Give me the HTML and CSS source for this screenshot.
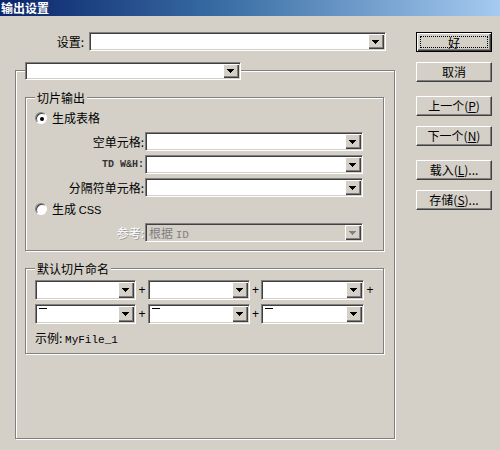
FILE: index.html
```html
<!DOCTYPE html>
<html lang="zh">
<head>
<meta charset="utf-8">
<title>输出设置</title>
<link rel="stylesheet" href="styles.css">
</head>
<body>
<div class="window">
<div class="titlebar">输出设置</div>
<div class="dialog">
  <div class="main">
    <div class="setrow">
      <span class="setlabel">设置:</span>
      <div class="combo w296"><div class="field"></div><div class="dd"><svg width="7" height="4" class="arr"><rect x="0" y="0" width="7" height="1"/><rect x="1" y="1" width="5" height="1"/><rect x="2" y="2" width="3" height="1"/><rect x="3" y="3" width="1" height="1"/></svg></div></div>
    </div>
    <div class="outer">
      <div class="combo legendcombo"><div class="field"></div><div class="dd"><svg width="7" height="4" class="arr"><rect x="0" y="0" width="7" height="1"/><rect x="1" y="1" width="5" height="1"/><rect x="2" y="2" width="3" height="1"/><rect x="3" y="3" width="1" height="1"/></svg></div></div>
      <div class="group g1">
        <div class="glegend">切片输出</div>
        <div class="radiorow"><span class="radio"><span class="dot"></span></span><span>生成表格</span></div>
        <div class="frow r1"><span class="flabel">空单元格:</span><div class="combo wide"><div class="field"></div><div class="dd"><svg width="7" height="4" class="arr"><rect x="0" y="0" width="7" height="1"/><rect x="1" y="1" width="5" height="1"/><rect x="2" y="2" width="3" height="1"/><rect x="3" y="3" width="1" height="1"/></svg></div></div></div>
        <div class="frow r2"><span class="flabel mono">TD W&amp;H:</span><div class="combo wide"><div class="field"></div><div class="dd"><svg width="7" height="4" class="arr"><rect x="0" y="0" width="7" height="1"/><rect x="1" y="1" width="5" height="1"/><rect x="2" y="2" width="3" height="1"/><rect x="3" y="3" width="1" height="1"/></svg></div></div></div>
        <div class="frow r2"><span class="flabel">分隔符单元格:</span><div class="combo wide"><div class="field"></div><div class="dd"><svg width="7" height="4" class="arr"><rect x="0" y="0" width="7" height="1"/><rect x="1" y="1" width="5" height="1"/><rect x="2" y="2" width="3" height="1"/><rect x="3" y="3" width="1" height="1"/></svg></div></div></div>
        <div class="radiorow r5"><span class="radio off"></span><span>生成 <span class="latin">CSS</span></span></div>
        <div class="frow r6"><span class="flabel disabled">参考:</span><div class="combo wide dis"><div class="field"><span class="distext">根据 <span class="latin">ID</span></span></div><div class="dd"><svg width="7" height="4" class="arr"><rect x="0" y="0" width="7" height="1"/><rect x="1" y="1" width="5" height="1"/><rect x="2" y="2" width="3" height="1"/><rect x="3" y="3" width="1" height="1"/></svg></div></div></div>
      </div>
      <div class="group g2">
        <div class="glegend">默认切片命名</div>
        <div class="nrow">
          <div class="combo n1"><div class="field"></div><div class="dd"><svg width="7" height="4" class="arr"><rect x="0" y="0" width="7" height="1"/><rect x="1" y="1" width="5" height="1"/><rect x="2" y="2" width="3" height="1"/><rect x="3" y="3" width="1" height="1"/></svg></div></div>
          <span class="plus p1">+</span>
          <div class="combo n2"><div class="field"></div><div class="dd"><svg width="7" height="4" class="arr"><rect x="0" y="0" width="7" height="1"/><rect x="1" y="1" width="5" height="1"/><rect x="2" y="2" width="3" height="1"/><rect x="3" y="3" width="1" height="1"/></svg></div></div>
          <span class="plus p2">+</span>
          <div class="combo n3"><div class="field"></div><div class="dd"><svg width="7" height="4" class="arr"><rect x="0" y="0" width="7" height="1"/><rect x="1" y="1" width="5" height="1"/><rect x="2" y="2" width="3" height="1"/><rect x="3" y="3" width="1" height="1"/></svg></div></div>
          <span class="plus p1">+</span>
        </div>
        <div class="nrow second">
          <div class="combo n1"><div class="field"><span class="dash"></span></div><div class="dd"><svg width="7" height="4" class="arr"><rect x="0" y="0" width="7" height="1"/><rect x="1" y="1" width="5" height="1"/><rect x="2" y="2" width="3" height="1"/><rect x="3" y="3" width="1" height="1"/></svg></div></div>
          <span class="plus p1">+</span>
          <div class="combo n2"><div class="field"><span class="dash"></span></div><div class="dd"><svg width="7" height="4" class="arr"><rect x="0" y="0" width="7" height="1"/><rect x="1" y="1" width="5" height="1"/><rect x="2" y="2" width="3" height="1"/><rect x="3" y="3" width="1" height="1"/></svg></div></div>
          <span class="plus p2">+</span>
          <div class="combo n3"><div class="field"><span class="dash"></span></div><div class="dd"><svg width="7" height="4" class="arr"><rect x="0" y="0" width="7" height="1"/><rect x="1" y="1" width="5" height="1"/><rect x="2" y="2" width="3" height="1"/><rect x="3" y="3" width="1" height="1"/></svg></div></div>
        </div>
        <div class="example">示例: <span class="mono">MyFile_1</span></div>
      </div>
    </div>
  </div>
  <div class="buttons">
    <div class="btn default"><span class="focus">好</span></div>
    <div class="btn b2">取消</div>
    <div class="btn b3">上一个(<u>P</u>)</div>
    <div class="btn b4">下一个(<u>N</u>)</div>
    <div class="btn b3">载入(<u>L</u>)...</div>
    <div class="btn b4">存储(<u>S</u>)...</div>
  </div>
</div>
</div>
</body>
</html>
```
FILE: styles.css
```css
* { box-sizing: border-box; }
html, body {
  margin: 0;
  padding: 0;
  background: #d4d0c8;
}
body {
  font-family: "Noto Sans CJK SC", "Liberation Sans", sans-serif;
  font-size: 12px;
  line-height: 14px;
  color: #000;
}
.window {
  width: 500px;
  height: 450px;
  overflow: hidden;
}
.titlebar {
  height: 16px;
  line-height: 15px;
  padding-left: 1px;
  color: #fff;
  font-weight: bold;
  font-size: 12px;
  background: linear-gradient(to right, #0a246a 0%, #3a6ea5 45%, #a6caf0 100%);
}
.dialog {
  display: flex;
  align-items: flex-start;
}
.main {
  padding-left: 15px;
  width: 395px;
}
.setrow {
  margin-top: 16px;
  display: flex;
  height: 19px;
  align-items: center;
}
.setlabel {
  width: 74px;
  text-align: right;
  padding-right: 5px;
}
/* combobox */
.combo {
  display: flex;
  flex: none;
  height: 19px;
  background: #fff;
  border: 1px solid;
  border-color: #808080 #fff #fff #808080;
  box-shadow: inset 1px 1px 0 #404040, inset -1px -1px 0 #d4d0c8;
  padding: 1px;
}
.combo .field {
  flex: 1;
  padding-left: 2px;
  line-height: 15px;
  overflow: hidden;
}
.combo .dd {
  width: 16px;
  background: #d4d0c8;
  box-shadow: inset 1px 1px 0 #fff, inset -1px -1px 0 #404040, inset -2px -2px 0 #808080;
  display: flex;
  align-items: center;
  justify-content: center;
  padding-right: 1px;
}
.arr { display: block; fill: #000; shape-rendering: crispEdges; }
.combo.dis { background: #d4d0c8; }
.combo.dis .arr { fill: #808080; }
.distext { color: #808080; }
.w296 { width: 297px; }
.legendcombo {
  width: 216px;
  height: 18px;
  margin: -9px 0 0 9px;
}
.outer {
  margin-top: 19px;
  width: 380px;
  padding-bottom: 84px;
  border: 1px solid #808080;
  box-shadow: inset 1px 1px 0 #fff, 1px 1px 0 #fff;
}
.group {
  width: 359px;
  margin-left: 9px;
  margin-top: 17px;
  border: 1px solid #808080;
  box-shadow: inset 1px 1px 0 #fff, 1px 1px 0 #fff;
  padding-bottom: 8px;
}
.glegend {
  width: fit-content;
  height: 14px;
  margin: -7px 0 0 9px;
  padding: 0 2px;
  background: #d4d0c8;
  line-height: 14px;
}
.radiorow {
  margin-top: 6px;
  height: 14px;
  display: flex;
  align-items: center;
  padding-left: 9px;
  gap: 5px;
}
.radiorow.r5 { margin-top: 5px; }
.radio {
  width: 12px;
  height: 12px;
  border-radius: 50%;
  background: #fff;
  border: 1px solid;
  border-color: #808080 #fff #fff #808080;
  box-shadow: inset 1px 1px 0 #404040;
  display: flex;
  align-items: center;
  justify-content: center;
}
.radio .dot {
  width: 4px;
  height: 4px;
  border-radius: 50%;
  background: #000;
  margin: 1px 0 0 1px;
}
.frow {
  display: flex;
  align-items: center;
  height: 19px;
}
.frow.r1 { margin-top: 7px; }
.frow.r2 { margin-top: 4px; }
.frow.r6 { margin-top: 7px; }
.flabel {
  width: 119px;
  text-align: right;
  padding-right: 1px;
}
.flabel.mono {
  font-family: "Liberation Mono", monospace;
  font-weight: bold;
  font-size: 10px;
  color: #333;
}
.flabel.disabled {
  color: #fff;
  text-shadow: 1px 1px 0 #9a9a9a;
}
.wide { width: 218px; }
.latin { font-family: "Liberation Sans", sans-serif; font-size: 11px; }
.distext .latin { font-family: "Liberation Mono", monospace; }
.nrow {
  display: flex;
  align-items: center;
  margin-top: 4px;
  padding-left: 9px;
  height: 20px;
}
.nrow .combo { height: 20px; }
.n1 { width: 101px; }
.n2 { width: 102px; }
.n3 { width: 103px; }
.plus {
  font-family: "Liberation Sans", sans-serif;
  font-size: 12px;
  text-align: center;
  line-height: 14px;
}
.p1 { width: 12px; }
.p2 { width: 11px; }
.dash {
  display: block;
  width: 8px;
  height: 1px;
  background: #000;
  margin-top: 2px;
}
.example {
  margin-top: 7px;
  height: 14px;
  padding-left: 9px;
  line-height: 14px;
}
.example .mono {
  font-family: "Liberation Mono", monospace;
  font-size: 11px;
}
/* buttons */
.buttons {
  margin-left: 21px;
  margin-top: 16px;
  display: flex;
  flex-direction: column;
}
.btn {
  width: 76px;
  height: 20px;
  background: #d4d0c8;
  border: 1px solid;
  border-color: #fff #404040 #404040 #fff;
  box-shadow: inset -1px -1px 0 #808080;
  text-align: center;
  line-height: 17px;
}
.btn u { text-underline-offset: 1px; }
.btn.default {
  border: 1px solid #000;
  box-shadow: inset 1px 1px 0 #fff, inset -1px -1px 0 #404040, inset -2px -2px 0 #808080;
  padding: 3px;
  display: flex;
}
.focus {
  flex: 1;
  border: 1px dotted #000;
  line-height: 11px;
}
.b2 { margin-top: 10px; }
.b3 { margin-top: 14px; }
.b4 { margin-top: 10px; }
```
